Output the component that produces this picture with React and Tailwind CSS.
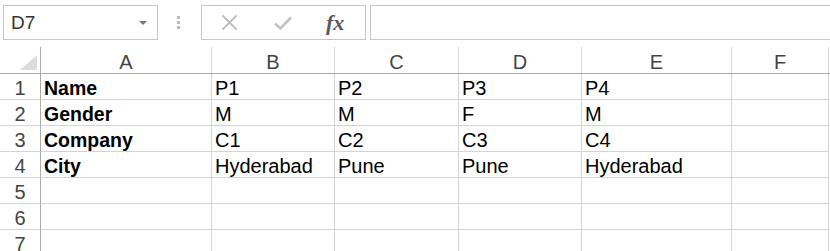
import React from 'react';

const cols = [
  { key: 'A', w: 'w-[171px]' },
  { key: 'B', w: 'w-[123px]' },
  { key: 'C', w: 'w-[124px]' },
  { key: 'D', w: 'w-[123px]' },
  { key: 'E', w: 'w-[150px]' },
  { key: 'F', w: 'w-[97px]' },
];

const rows = [
  ['Name', 'P1', 'P2', 'P3', 'P4', ''],
  ['Gender', 'M', 'M', 'F', 'M', ''],
  ['Company', 'C1', 'C2', 'C3', 'C4', ''],
  ['City', 'Hyderabad', 'Pune', 'Pune', 'Hyderabad', ''],
  ['', '', '', '', '', ''],
  ['', '', '', '', '', ''],
  ['', '', '', '', '', ''],
];

const FormulaBar = () => (
  <div className="flex items-center h-[44px] pt-[5px] pb-[5px] pl-[3px]">
    <div className="flex items-center justify-between w-[155px] h-[35px] border border-[#c6c6c6] pl-[7px] pr-[10px] pt-[2px] text-[19px] text-[#333]">
      <span>D7</span>
      <div className="w-0 h-0 border-l-[4px] border-r-[4px] border-t-[4px] border-l-transparent border-r-transparent border-t-[#777]" />
    </div>
    <div className="flex flex-col gap-[2px] ml-[19px] mr-[21px]">
      <div className="w-[3px] h-[3px] bg-[#bbb]" />
      <div className="w-[3px] h-[3px] bg-[#bbb]" />
      <div className="w-[3px] h-[3px] bg-[#bbb]" />
    </div>
    <div className="flex items-center w-[165px] h-[35px] border border-[#c6c6c6]">
      <svg className="ml-[19px]" width="17" height="17" viewBox="0 0 17 17">
        <path d="M1.5 1.5 L15.5 15.5 M15.5 1.5 L1.5 15.5" stroke="#bdbdbd" strokeWidth="1.8" fill="none" />
      </svg>
      <svg className="ml-[36px] mt-[2px]" width="18" height="14" viewBox="0 0 18 14">
        <path d="M1 7.5 L6.5 12.5 L17 1.5" stroke="#c4c4c4" strokeWidth="2.6" fill="none" />
      </svg>
      <span className="ml-[34px] text-[22px] italic font-bold text-[#5a5a5a]" style={{ fontFamily: '"Liberation Serif", serif' }}>
        fx
      </span>
    </div>
    <div className="flex-1 h-[35px] ml-[4px] border border-r-0 border-[#c6c6c6]" />
  </div>
);

export default function App() {
  return (
    <div className="w-[830px] h-[251px] overflow-hidden bg-white text-[20px] text-black" style={{ fontFamily: '"Liberation Sans", Arial, sans-serif' }}>
      <FormulaBar />
      <div className="flex items-end h-[30px] border-b border-[#ababab]">
        <div className="relative w-[41px] h-[26px] border-r border-[#ababab]">
          <svg className="absolute right-[3px] bottom-[3px]" width="17" height="15" viewBox="0 0 17 15">
            <polygon points="17,0 17,15 0,15" fill="#dcdcdc" />
          </svg>
        </div>
        {cols.map(c => (
          <div key={c.key} className={`${c.w} h-[26px] border-r border-[#dadada] flex items-end justify-center pb-[1px] text-[#444] leading-none`}>
            {c.key}
          </div>
        ))}
      </div>
      {rows.map((r, i) => (
        <div key={i} className="flex h-[26px]">
          <div className="w-[41px] h-[26px] border-r border-b border-r-[#ababab] border-b-[#d4d4d4] flex items-end justify-center pb-[1px] leading-none text-[#444]">
            {i + 1}
          </div>
          {cols.map((c, j) => (
            <div key={c.key} className={`${c.w} h-[26px] border-r border-b border-[#d4d4d4] pl-[3px] pb-[1px] flex items-end leading-none whitespace-nowrap ${j === 0 ? 'font-bold text-[19.5px]' : ''}`}>
              {r[j]}
            </div>
          ))}
        </div>
      ))}
    </div>
  );
}
